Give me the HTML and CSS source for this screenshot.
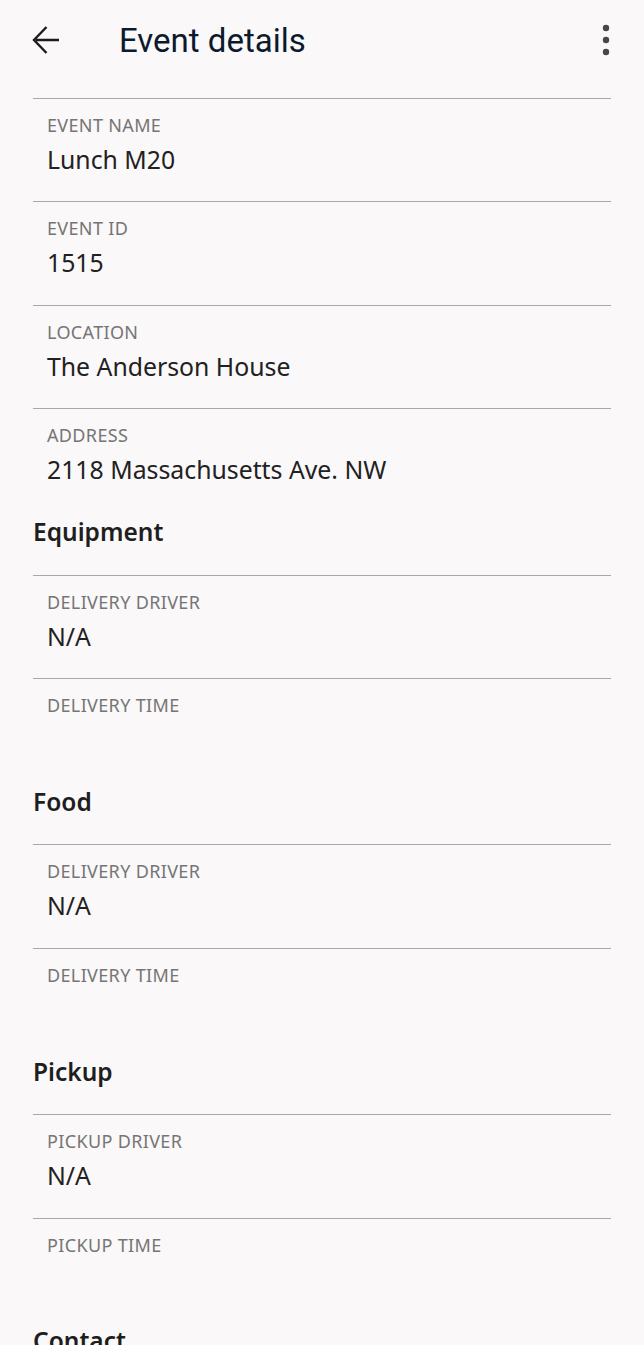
FILE: index.html
```html
<!DOCTYPE html>
<html lang="en">
<head>
<meta charset="utf-8">
<title>Event details</title>
<link rel="stylesheet" href="styles.css">
</head>
<body>
<header class="appbar">
  <button class="icon-btn back" aria-label="Back">
    <svg width="30" height="30" viewBox="0 0 30 30"><path d="M28 15H5M15.5 2L3 15l12.5 13" fill="none" stroke="#1c1c1c" stroke-width="2.4"/></svg>
  </button>
  <h1 class="title">Event details</h1>
  <button class="icon-btn more" aria-label="More">
    <svg width="8" height="32" viewBox="0 0 8 32"><circle cx="4" cy="4" r="3.2" fill="#474747"/><circle cx="4" cy="16" r="3.2" fill="#474747"/><circle cx="4" cy="28" r="3.2" fill="#474747"/></svg>
  </button>
</header>
<main class="content">
  <section class="group">
    <div class="row"><div class="label">EVENT NAME</div><div class="value">Lunch M20</div></div>
    <div class="row"><div class="label">EVENT ID</div><div class="value">1515</div></div>
    <div class="row"><div class="label">LOCATION</div><div class="value">The Anderson House</div></div>
    <div class="row"><div class="label">ADDRESS</div><div class="value">2118 Massachusetts Ave. NW</div></div>
  </section>
  <section class="group">
    <h2 class="heading">Equipment</h2>
    <div class="row"><div class="label">DELIVERY DRIVER</div><div class="value">N/A</div></div>
    <div class="row"><div class="label">DELIVERY TIME</div><div class="value"></div></div>
  </section>
  <section class="group">
    <h2 class="heading">Food</h2>
    <div class="row"><div class="label">DELIVERY DRIVER</div><div class="value">N/A</div></div>
    <div class="row"><div class="label">DELIVERY TIME</div><div class="value"></div></div>
  </section>
  <section class="group">
    <h2 class="heading">Pickup</h2>
    <div class="row"><div class="label">PICKUP DRIVER</div><div class="value">N/A</div></div>
    <div class="row"><div class="label">PICKUP TIME</div><div class="value"></div></div>
  </section>
  <section class="group">
    <h2 class="heading">Contact</h2>
  </section>
</main>
</body>
</html>
```
FILE: styles.css
```css
html, body {
  margin: 0;
  padding: 0;
  background: #faf8f9;
}
body {
  font-family: "Noto Sans", "DejaVu Sans", sans-serif;
  color: #212121;
  overflow: hidden;
  height: 1345px;
}
.appbar {
  height: 80px;
  display: flex;
  align-items: center;
  padding: 0 28px 0 31px;
}
.icon-btn {
  background: none;
  border: 0;
  padding: 0;
  display: flex;
  align-items: center;
  justify-content: center;
}
.back {
  width: 30px;
  height: 30px;
}
.title {
  margin: 0 0 0 58px;
  font-family: Roboto, "Noto Sans", sans-serif;
  font-weight: 400;
  font-size: 33px;
  color: #0c1a2e;
  flex: 1;
}
.more {
  width: 20px;
  height: 40px;
}
.content {
  margin: 18px 33px 0 33px;
}
.row {
  border-top: 1px solid #a8a8a8;
  padding: 14px 14px 26.4px;
}
.label {
  font-size: 18px;
  line-height: 24px;
  color: #757575;
  letter-spacing: 0.35px;
}
.value {
  margin-top: 6px;
  font-size: 24.8px;
  line-height: 32px;
  min-height: 32px;
  color: #212121;
}
.heading {
  margin: 0;
  padding: 4.5px 0 26.5px;
  font-size: 24.5px;
  line-height: 32px;
  font-weight: 600;
  color: #1e1e1e;
}
```
